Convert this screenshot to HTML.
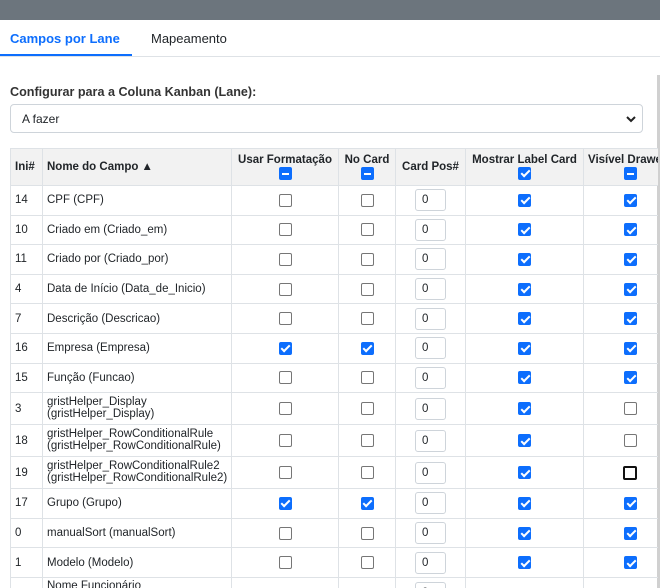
<!DOCTYPE html>
<html><head><meta charset="utf-8"><style>
*{box-sizing:border-box}
body{margin:0;width:660px;height:588px;overflow:hidden;background:#fff;font-family:"Liberation Sans",Arial,sans-serif;font-size:12px;color:#212529;position:relative}
.top{height:20px;background:#6c757d}
.tabs{position:absolute;top:20px;left:0;width:660px;height:37px;border-bottom:1px solid #dee2e6}
.tab{position:absolute;top:11px;font-size:13px}
.t1{left:10px;color:#0d6efd;font-weight:bold}
.t1u{position:absolute;left:0;top:34px;width:132px;height:2px;background:#0d6efd}
.t2{left:151px;color:#212529}
.lbl{position:absolute;left:10px;top:85px;font-size:12.6px;color:#333;font-weight:bold}
.sel{position:absolute;left:10px;top:104px;width:633px;height:29px;border:1px solid #ced4da;border-radius:4px;padding:7px 0 0 11px;font-size:12px}
.sel svg{position:absolute;right:6px;top:10px}
.wrap{position:absolute;left:10px;top:148px;width:648px;height:440px;overflow:hidden}
table{border-collapse:collapse;table-layout:fixed;width:680px}
td,th{border:1px solid #dee2e6;padding:0 4px;font-size:11.5px}
th{background:#f2f2f2;font-weight:bold;height:37px;text-align:center;line-height:13px;vertical-align:middle;white-space:nowrap;font-size:11.5px}
td{height:29.6px;white-space:nowrap}
td.c{text-align:center}
.cb{display:inline-block;width:13px;height:13px;border:1px solid #767676;border-radius:2px;vertical-align:middle;background:#fff}
.on{background:#0d6efd;border-color:#0d6efd;position:relative}
.on:after{content:"";position:absolute;left:3.5px;top:0.5px;width:3px;height:7px;border:solid #fff;border-width:0 2px 2px 0;transform:rotate(45deg)}
.ind{background:#0d6efd;border-color:#0d6efd;position:relative}
.ind:after{content:"";position:absolute;left:2px;top:5px;width:7px;height:2px;background:#fff}
.foc{border:2px solid #111;width:14px;height:14px}
.num{display:inline-block;width:31px;height:22px;border:1px solid #ced4da;border-radius:3px;text-align:left;padding:4px 0 0 6px;vertical-align:middle}
.sb{position:absolute;left:657px;top:75px;width:3px;height:513px;background:#d0d0d0}
.two{line-height:11.5px}
</style></head><body>
<div class="top"></div>
<div class="tabs"><span class="tab t1">Campos por Lane</span><div class="t1u"></div><span class="tab t2">Mapeamento</span></div>
<div class="lbl">Configurar para a Coluna Kanban (Lane):</div>
<div class="sel">A fazer<svg width="10" height="8" viewBox="0 0 10 8"><path d="M1 2l4 4 4-4" stroke="#222" stroke-width="2" fill="none"/></svg></div>
<div class="sb"></div>
<div class="wrap"><table>
<colgroup><col style="width:32px"><col style="width:189px"><col style="width:107px"><col style="width:57px"><col style="width:70px"><col style="width:118px"><col style="width:107px"></colgroup>
<tr><th style="text-align:left">Ini#</th><th style="text-align:left">Nome do Campo ▲</th><th>Usar Formatação<br><span class="cb ind"></span></th><th>No Card<br><span class="cb ind"></span></th><th>Card Pos#</th><th>Mostrar Label Card<br><span class="cb on"></span></th><th style="text-align:left">Visível Drawer<br><span class="cb ind" style="margin-left:36px"></span></th></tr>
<tr><td>14</td><td>CPF (CPF)</td><td class="c"><span class="cb"></span></td><td class="c"><span class="cb"></span></td><td class="c"><span class="num">0</span></td><td class="c"><span class="cb on"></span></td><td style="padding-left:40px"><span class="cb on"></span></td></tr>
<tr><td>10</td><td>Criado em (Criado_em)</td><td class="c"><span class="cb"></span></td><td class="c"><span class="cb"></span></td><td class="c"><span class="num">0</span></td><td class="c"><span class="cb on"></span></td><td style="padding-left:40px"><span class="cb on"></span></td></tr>
<tr><td>11</td><td>Criado por (Criado_por)</td><td class="c"><span class="cb"></span></td><td class="c"><span class="cb"></span></td><td class="c"><span class="num">0</span></td><td class="c"><span class="cb on"></span></td><td style="padding-left:40px"><span class="cb on"></span></td></tr>
<tr><td>4</td><td>Data de Início (Data_de_Inicio)</td><td class="c"><span class="cb"></span></td><td class="c"><span class="cb"></span></td><td class="c"><span class="num">0</span></td><td class="c"><span class="cb on"></span></td><td style="padding-left:40px"><span class="cb on"></span></td></tr>
<tr><td>7</td><td>Descrição (Descricao)</td><td class="c"><span class="cb"></span></td><td class="c"><span class="cb"></span></td><td class="c"><span class="num">0</span></td><td class="c"><span class="cb on"></span></td><td style="padding-left:40px"><span class="cb on"></span></td></tr>
<tr><td>16</td><td>Empresa (Empresa)</td><td class="c"><span class="cb on"></span></td><td class="c"><span class="cb on"></span></td><td class="c"><span class="num">0</span></td><td class="c"><span class="cb on"></span></td><td style="padding-left:40px"><span class="cb on"></span></td></tr>
<tr><td>15</td><td>Função (Funcao)</td><td class="c"><span class="cb"></span></td><td class="c"><span class="cb"></span></td><td class="c"><span class="num">0</span></td><td class="c"><span class="cb on"></span></td><td style="padding-left:40px"><span class="cb on"></span></td></tr>
<tr><td style="height:32px">3</td><td class="two">gristHelper_Display<br>(gristHelper_Display)</td><td class="c"><span class="cb"></span></td><td class="c"><span class="cb"></span></td><td class="c"><span class="num">0</span></td><td class="c"><span class="cb on"></span></td><td style="padding-left:40px"><span class="cb"></span></td></tr>
<tr><td style="height:32px">18</td><td class="two">gristHelper_RowConditionalRule<br>(gristHelper_RowConditionalRule)</td><td class="c"><span class="cb"></span></td><td class="c"><span class="cb"></span></td><td class="c"><span class="num">0</span></td><td class="c"><span class="cb on"></span></td><td style="padding-left:40px"><span class="cb"></span></td></tr>
<tr><td style="height:32px">19</td><td class="two">gristHelper_RowConditionalRule2<br>(gristHelper_RowConditionalRule2)</td><td class="c"><span class="cb"></span></td><td class="c"><span class="cb"></span></td><td class="c"><span class="num">0</span></td><td class="c"><span class="cb on"></span></td><td style="padding-left:39px"><span class="cb foc"></span></td></tr>
<tr><td>17</td><td>Grupo (Grupo)</td><td class="c"><span class="cb on"></span></td><td class="c"><span class="cb on"></span></td><td class="c"><span class="num">0</span></td><td class="c"><span class="cb on"></span></td><td style="padding-left:40px"><span class="cb on"></span></td></tr>
<tr><td>0</td><td>manualSort (manualSort)</td><td class="c"><span class="cb"></span></td><td class="c"><span class="cb"></span></td><td class="c"><span class="num">0</span></td><td class="c"><span class="cb on"></span></td><td style="padding-left:40px"><span class="cb on"></span></td></tr>
<tr><td>1</td><td>Modelo (Modelo)</td><td class="c"><span class="cb"></span></td><td class="c"><span class="cb"></span></td><td class="c"><span class="num">0</span></td><td class="c"><span class="cb on"></span></td><td style="padding-left:40px"><span class="cb on"></span></td></tr>
<tr><td style="height:32px;vertical-align:top"></td><td class="two" style="vertical-align:top;padding-top:3px">Nome Funcionário<br>(Nome_Funcionario)</td><td></td><td></td><td class="c" style="vertical-align:top;padding-top:4px"><span class="num">0</span></td><td></td><td></td></tr>
</table></div>
</body></html>
